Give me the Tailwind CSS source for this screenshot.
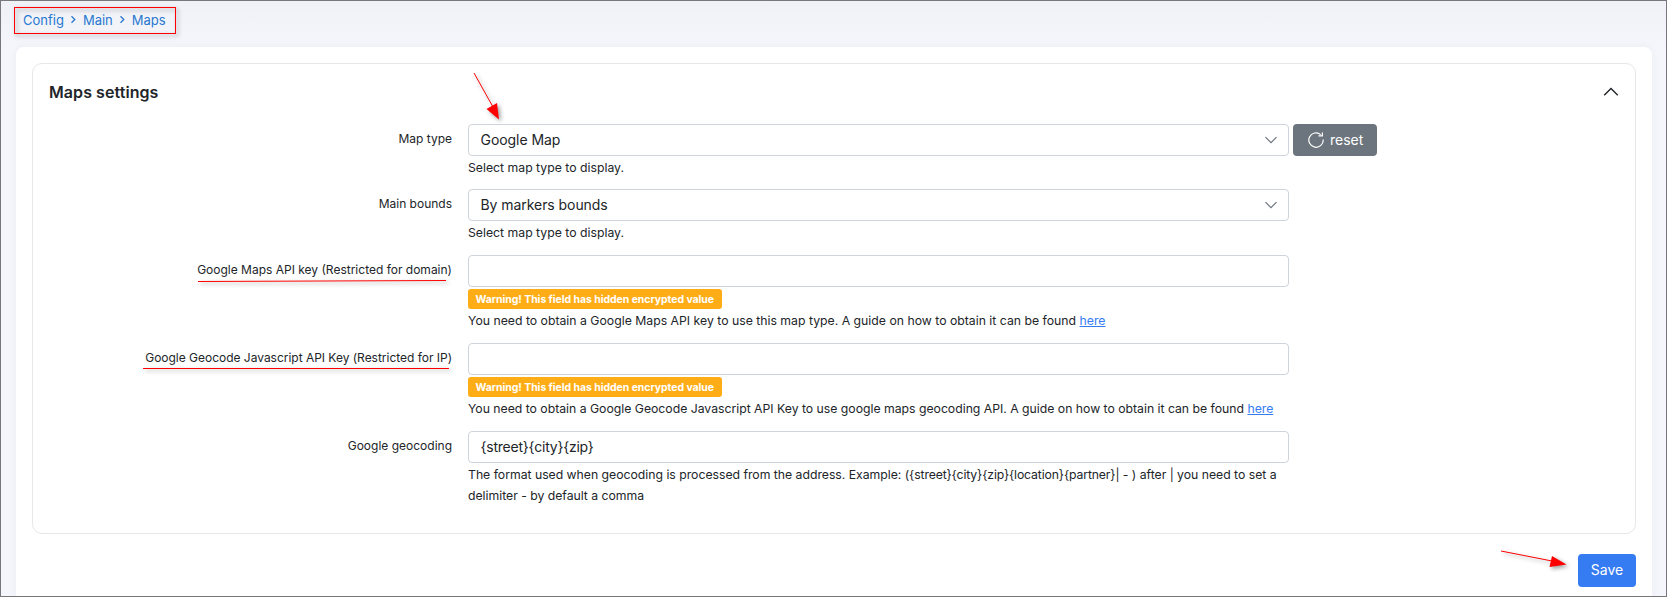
<!DOCTYPE html>
<html lang="en">
<head>
<meta charset="utf-8">
<title>Maps settings</title>
<script src="https://cdn.jsdelivr.net/npm/@tailwindcss/browser@4"></script>
</head>
<body class="font-['Inter',sans-serif] text-[#212529]">
<div class="relative h-[597px] w-[1667px] overflow-hidden border border-[#77777c] bg-linear-to-b from-[#f0f1f6] to-[#f5f6fb] to-8% pr-[14px] pl-[15px]">
  <nav class="flex h-[46px] items-start pt-[9px] pl-[7px] text-[13px] leading-[21px] text-[#2878d0]">
    <a>Config</a>
    <svg class="mr-[6px] ml-[6px] mt-[5px] h-[9px] w-[7px]" viewBox="0 0 7 9" fill="none" stroke="currentColor" stroke-width="1.3"><path d="M1.500 1.200 4.800 4.500 1.500 7.800"/></svg>
    <a>Main</a>
    <svg class="mr-[6px] ml-[6px] mt-[5px] h-[9px] w-[7px]" viewBox="0 0 7 9" fill="none" stroke="currentColor" stroke-width="1.3"><path d="M1.500 1.200 4.800 4.500 1.500 7.800"/></svg>
    <a>Maps</a>
  </nav>
  <main class="h-[560px] rounded-lg bg-white p-4 shadow-[0_0_8px_rgba(40,50,90,0.05)]">
    <section class="h-[471px] rounded-[10px] border border-[#e6e7ea] px-4">
      <header class="flex h-[60px] items-start justify-between pt-4">
        <h1 class="text-base leading-6 font-semibold tracking-[0.07px]">Maps settings</h1>
        <svg class="mt-[4px] h-4 w-4" viewBox="0 0 16 16" fill="none" stroke="#212529" stroke-width="1.4"><path d="M1.200 11.200 8 4.600l6.800 6.600"/></svg>
      </header>
      <div class="grid grid-cols-[403px_821px_auto] gap-x-4 text-[12.25px] leading-[21px]">
        <label class="h-[65px] pt-[4px] text-right text-xs leading-[21px]">Map type</label>
        <div>
          <div class="flex h-8 items-center justify-between rounded border border-[#ced4da] pr-[11px] pl-[11.5px] text-sm tracking-[-0.06px]"><span>Google Map</span><svg class="h-3 w-3" viewBox="0 0 12 12" fill="none" stroke="#6c757d" stroke-width="1.2"><path d="M.5 3.200 6 8.700l5.500-5.500"/></svg></div>
          <p class="pt-px">Select map type to display.</p>
        </div>
        <button class="ml-[-12px] flex h-8 w-[84px] items-center rounded bg-[#6c757d] pl-[15px] text-sm text-white"><svg class="mr-[6px] h-4 w-4" viewBox="0 0 16 16" fill="none" stroke="white" stroke-width="1.2"><path d="M15.200 7.500a7.200 7.200 0 1 1-2.500-4.900M10.500 3.800h3.900V.6"/></svg>reset</button>

        <label class="h-[66px] pt-[4px] text-right text-xs leading-[21px]">Main bounds</label>
        <div class="col-span-2 w-[821px]">
          <div class="flex h-8 items-center justify-between rounded border border-[#ced4da] pr-[11px] pl-[11.5px] text-sm tracking-[-0.06px]"><span>By markers bounds</span><svg class="h-3 w-3" viewBox="0 0 12 12" fill="none" stroke="#6c757d" stroke-width="1.2"><path d="M.5 3.200 6 8.700l5.500-5.500"/></svg></div>
          <p class="pt-px">Select map type to display.</p>
        </div>

        <label class="h-[88px] pt-[4px] text-right text-xs leading-[21px]">Google Maps API key (Restricted for domain)</label>
        <div class="col-span-2 w-[821px]">
          <div class="h-8 rounded border border-[#ced4da]"></div>
          <div class="mt-[2px] flex h-5 w-[254px] items-center rounded-[3px] bg-[#ffad16] pl-[7.5px] text-[10.5px] font-bold tracking-[-0.07px] text-white">Warning! This field has hidden encrypted value</div>
          <p class="pt-px">You need to obtain a Google Maps API key to use this map type. A guide on how to obtain it can be found <a class="text-[#357bf2] underline">here</a></p>
        </div>

        <label class="h-[88px] pt-[4px] text-right text-xs leading-[21px] tracking-[-0.02px]">Google Geocode Javascript API Key (Restricted for IP)</label>
        <div class="col-span-2 w-[821px]">
          <div class="h-8 rounded border border-[#ced4da]"></div>
          <div class="mt-[2px] flex h-5 w-[254px] items-center rounded-[3px] bg-[#ffad16] pl-[7.5px] text-[10.5px] font-bold tracking-[-0.07px] text-white">Warning! This field has hidden encrypted value</div>
          <p class="pt-px whitespace-nowrap tracking-[-0.016px]">You need to obtain a Google Geocode Javascript API Key to use google maps geocoding API. A guide on how to obtain it can be found <a class="text-[#357bf2] underline">here</a></p>
        </div>

        <label class="pt-[4px] text-right text-xs leading-[21px]">Google geocoding</label>
        <div class="col-span-2 w-[821px]">
          <div class="flex h-8 items-center rounded border border-[#ced4da] pl-[11.5px] text-sm tracking-[-0.22px]">{street}{city}{zip}</div>
          <p class="pt-px whitespace-nowrap tracking-[-0.02px]">The format used when geocoding is processed from the address. Example: <span class="tracking-[-0.14px]">({street}{city}{zip}{location}{partner}|</span> - ) after | you need to set a<br>delimiter - by default a comma</p>
        </div>
      </div>
    </section>
    <div class="flex justify-end pt-5">
      <button class="h-[33px] w-[58px] rounded bg-[#357bf2] pb-[2px] text-sm text-white">Save</button>
    </div>
  </main>

  <!-- Annotations drawn over the page -->
  <svg class="pointer-events-none absolute -top-px -left-px h-[597px] w-[1667px] [filter:drop-shadow(2px_2px_2px_rgba(0,0,0,0.4))]" viewBox="0 0 1667 597" fill="none" stroke="#f00">
    <rect x="14.500" y="7.500" width="161" height="26"/>
    <path d="M474 73 493 107M1501 551l51 10"/>
    <path d="M198 281.500 446 280.500M143 368.500H449"/>
    <path d="M499 119.500 486.500 109 497 103ZM1566.500 564.500 1549.500 567 1552 556Z" fill="#f00" stroke="none"/>
  </svg>
</div>
</body>
</html>
